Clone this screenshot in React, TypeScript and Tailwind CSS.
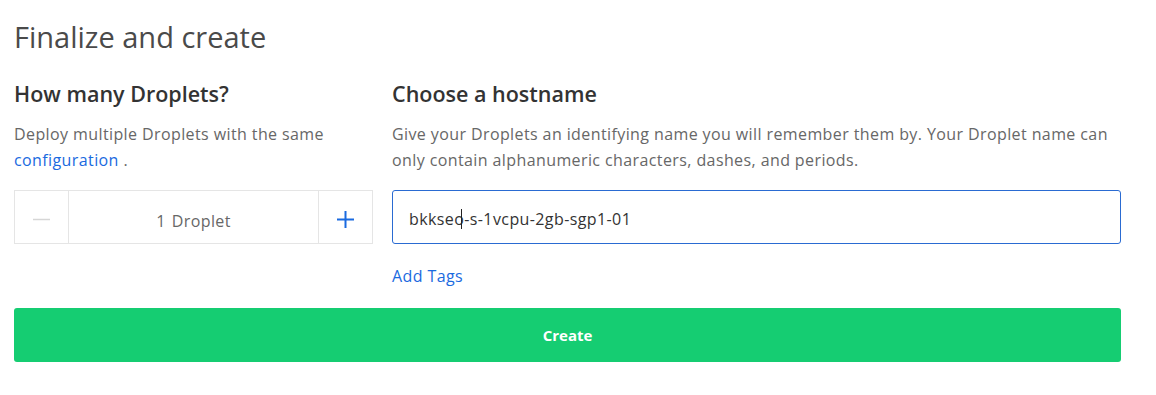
const font = { fontFamily: "'Open Sans', Lato, sans-serif" };

function Stepper() {
  return (
    <div className="mt-[17px] flex h-[54px] w-full border border-[#e5e5e5] bg-white">
      <button className="flex w-[54px] items-center justify-center border-r border-[#e5e5e5]">
        <svg width="17" height="17" viewBox="0 0 17 17" className="mt-[4px]">
          <path d="M0 8.5H17" stroke="#d6d6d6" strokeWidth="1.5" />
        </svg>
      </button>
      <div className="flex flex-1 items-center justify-center gap-[6px] pt-[7px] text-[16px] tracking-[0.4px] text-[#676767]">
        <span>1</span>
        <span>Droplet</span>
      </div>
      <button className="flex w-[54px] items-center justify-center border-l border-[#e5e5e5]">
        <svg width="17" height="17" viewBox="0 0 17 17" className="mt-[4px]">
          <path d="M0 8.5H17M8.5 0V17" stroke="#1a6ae0" strokeWidth="2" />
        </svg>
      </button>
    </div>
  );
}

export default function App() {
  return (
    <div className="min-h-[395px] w-[1156px] bg-white pl-[14px] pt-[19px]" style={font}>
      <h1 className="text-[29px] leading-[36px] text-[#4a4a4a]">Finalize and create</h1>

      <div className="mt-[25px] grid grid-cols-[359px_729px] gap-x-[19px]">
        <div>
          <h2 className="text-[21.5px] font-semibold leading-[28px] text-[#333]">How many Droplets?</h2>
          <p className="mt-[13px] text-[16px] leading-[26px] tracking-[0.4px] text-[#676767]">
            Deploy multiple Droplets with the same{" "}
            <a href="#" className="text-[#1a6ae0]">
              configuration
            </a>{" "}
            .
          </p>
          <Stepper />
        </div>

        <div>
          <h2 className="text-[21.5px] font-semibold leading-[28px] text-[#333]">Choose a hostname</h2>
          <p className="mt-[13px] text-[16px] leading-[26px] tracking-[0.4px] text-[#676767]">
            Give your Droplets an identifying name you will remember them by. Your Droplet name can only
            contain alphanumeric characters, dashes, and periods.
          </p>
          <div className="mt-[17px] flex h-[54px] items-center rounded-[3px] border border-[#2a6bd2] px-[16px] pt-[3px] text-[16px] tracking-[0.4px] text-[#333]">
            <span>bkkseo</span>
            <span className="-ml-[3px] mr-[2px] inline-block h-[20px] w-px bg-[#222]" />
            <span>-s-1vcpu-2gb-sgp1-01</span>
          </div>
          <a href="#" className="mt-[20px] block text-[16px] leading-[24px] tracking-[0.4px] text-[#1a6ae0]">
            Add Tags
          </a>
        </div>
      </div>

      <button className="mt-[20px] flex h-[54px] w-[1107px] items-center justify-center rounded-[3px] bg-[#15cd72] text-[15px] font-bold text-white">
        Create
      </button>
    </div>
  );
}
